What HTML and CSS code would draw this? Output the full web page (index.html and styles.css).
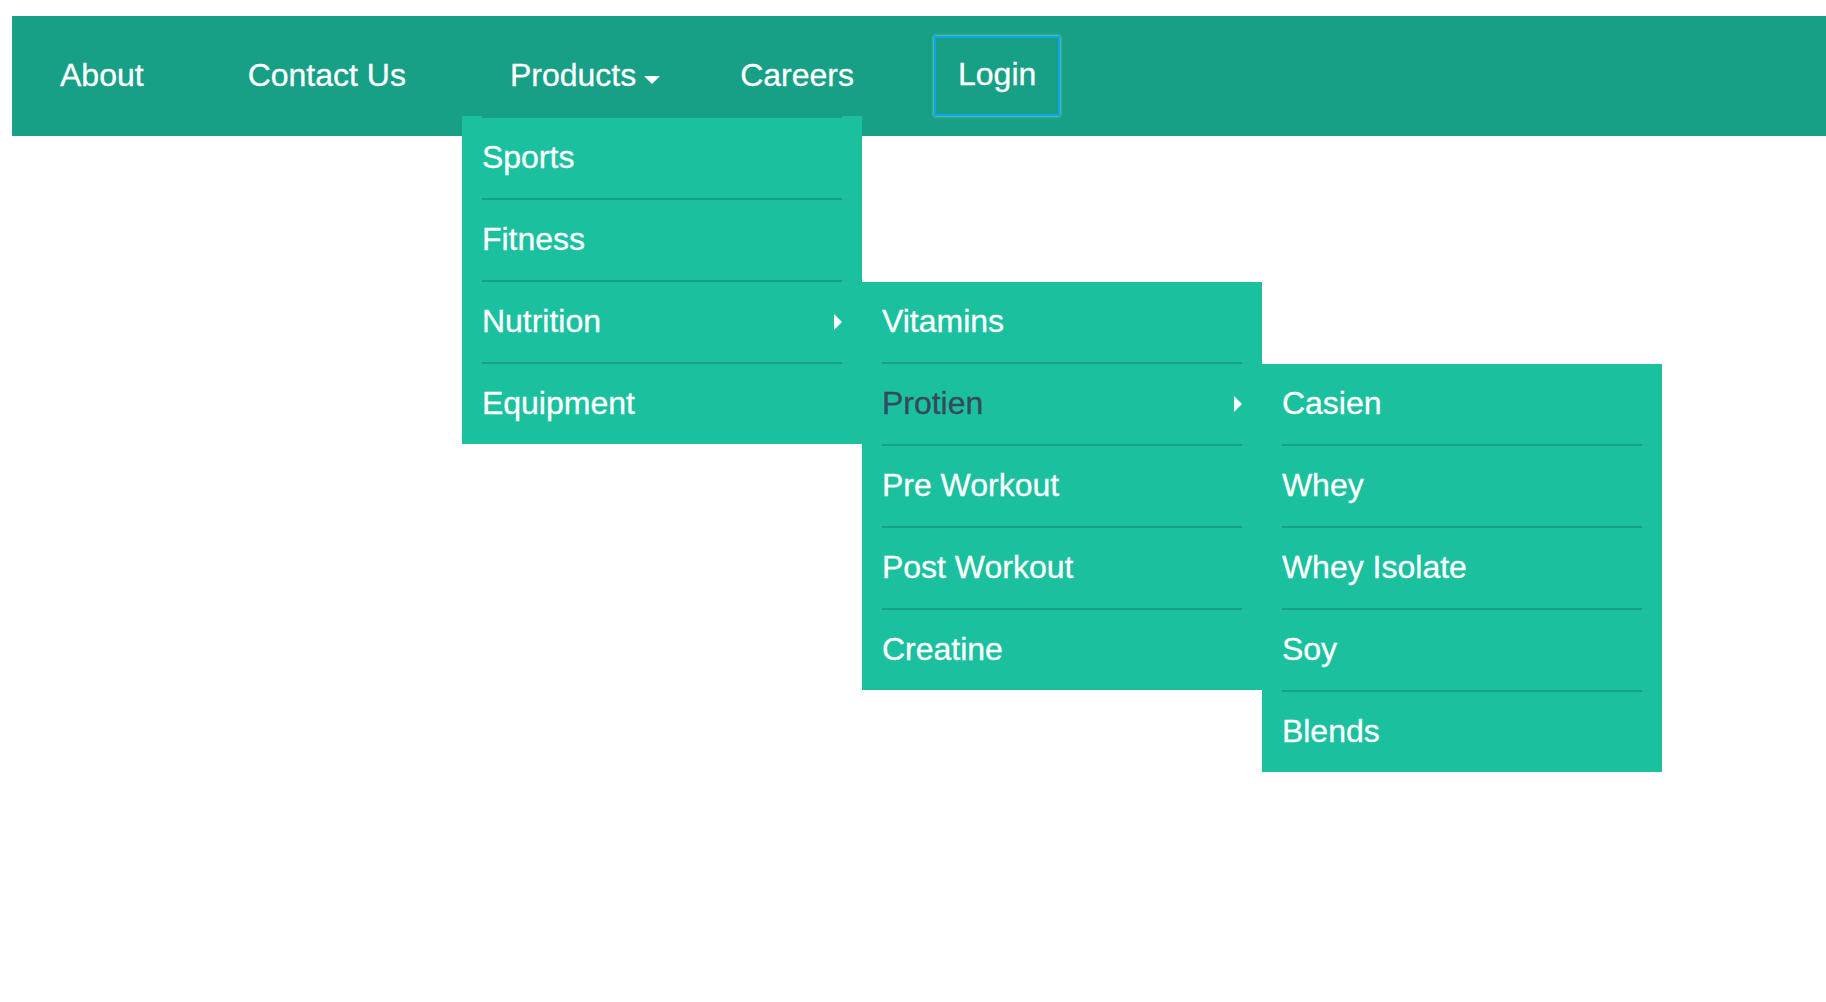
FILE: index.html
```html
<!DOCTYPE html>
<html lang="en">
<head>
<meta charset="utf-8">
<title>Menu</title>
<link rel="stylesheet" href="styles.css">
</head>
<body>
<div class="page">
  <nav class="navbar">
    <ul class="nav-list">
      <li class="nav-item"><a class="nav-link nav-link--spaced" href="#">About</a></li>
      <li class="nav-item"><a class="nav-link nav-link--spaced" href="#">Contact Us</a></li>
      <li class="nav-item">
        <a class="nav-link" href="#">Products<svg class="caret" viewBox="0 0 16 8" width="16" height="8"><polygon points="0,0 16,0 8,8" fill="#ffffff"/></svg></a>
        <ul class="menu menu--level1">
          <li class="menu-item"><a class="menu-link" href="#">Sports</a></li>
          <li class="menu-item"><a class="menu-link" href="#">Fitness</a></li>
          <li class="menu-item">
            <a class="menu-link" href="#">Nutrition<svg class="arrow" viewBox="0 0 8 16" width="8" height="16"><polygon points="0,0 8,8 0,16" fill="#ffffff"/></svg></a>
            <ul class="menu menu--sub">
              <li class="menu-item"><a class="menu-link" href="#">Vitamins</a></li>
              <li class="menu-item">
                <a class="menu-link menu-link--active" href="#">Protien<svg class="arrow" viewBox="0 0 8 16" width="8" height="16"><polygon points="0,0 8,8 0,16" fill="#ffffff"/></svg></a>
                <ul class="menu menu--sub">
                  <li class="menu-item"><a class="menu-link" href="#">Casien</a></li>
                  <li class="menu-item"><a class="menu-link" href="#">Whey</a></li>
                  <li class="menu-item"><a class="menu-link" href="#">Whey Isolate</a></li>
                  <li class="menu-item"><a class="menu-link" href="#">Soy</a></li>
                  <li class="menu-item"><a class="menu-link" href="#">Blends</a></li>
                </ul>
              </li>
              <li class="menu-item"><a class="menu-link" href="#">Pre Workout</a></li>
              <li class="menu-item"><a class="menu-link" href="#">Post Workout</a></li>
              <li class="menu-item"><a class="menu-link" href="#">Creatine</a></li>
            </ul>
          </li>
          <li class="menu-item"><a class="menu-link" href="#">Equipment</a></li>
        </ul>
      </li>
      <li class="nav-item"><a class="nav-link" href="#">Careers</a></li>
      <li class="nav-item nav-item--login"><a class="login-btn" href="#">Login</a></li>
    </ul>
  </nav>
</div>
</body>
</html>
```

FILE: styles.css
```css
html, body {
  margin: 0;
  padding: 0;
  background: #ffffff;
  min-height: 100%;
}

html {
  height: 100%;
}

body {
  font-family: "Liberation Sans", Arial, Helvetica, sans-serif;
}

.page {
  box-sizing: border-box;
  min-height: 100vh;
  padding: 16px 0 0 12px;
}

.navbar {
  position: relative;
  background: #17a086;
  height: 120px;
}

.nav-list {
  display: flex;
  list-style: none;
  margin: 0;
  padding: 0 0 0 48px;
  gap: 80px;
  height: 120px;
}

.nav-item {
  position: relative;
  display: flex;
  align-items: flex-start;
}

.nav-link {
  display: block;
  color: #ffffff;
  text-decoration: none;
  font-size: 32px;
  line-height: 118px;
  white-space: nowrap;
  -webkit-text-stroke: 0.3px #ffffff;
}

.nav-link--spaced {
  padding-right: 24px;
}

.caret {
  display: inline-block;
  margin-left: 8px;
  vertical-align: 2px;
}

.nav-item--login {
  align-items: center;
}

.login-btn {
  display: block;
  box-sizing: border-box;
  height: 80px;
  padding: 0 22px 3px;
  border: 2px solid #0ea4f2;
  box-shadow: 0 0 3px rgba(210, 255, 250, 0.7);
  color: #ffffff;
  text-decoration: none;
  font-size: 32px;
  line-height: 73px;
  -webkit-text-stroke: 0.3px #ffffff;
}

.menu {
  position: absolute;
  display: block;
  list-style: none;
  margin: 0;
  padding: 0;
  width: 400px;
  background: #1bc19f;
  z-index: 2;
}

.menu--level1 {
  top: 100px;
  left: -48px;
}

.menu--sub {
  top: 2px;
  left: 100%;
}

.menu-item {
  position: relative;
  display: block;
  padding: 0 20px;
}

.menu-link {
  display: flex;
  justify-content: space-between;
  align-items: center;
  border-top: 2px solid #17a086;
  padding: 19px 0 21px;
  color: #ffffff;
  text-decoration: none;
  font-size: 32px;
  line-height: 40px;
  white-space: nowrap;
  -webkit-text-stroke: 0.3px currentColor;
}

.menu--sub > .menu-item:first-child > .menu-link {
  border-top: none;
}

.menu-link--active {
  color: #34495e;
}

.arrow {
  display: block;
  margin-top: 2px;
  flex: none;
}
```
